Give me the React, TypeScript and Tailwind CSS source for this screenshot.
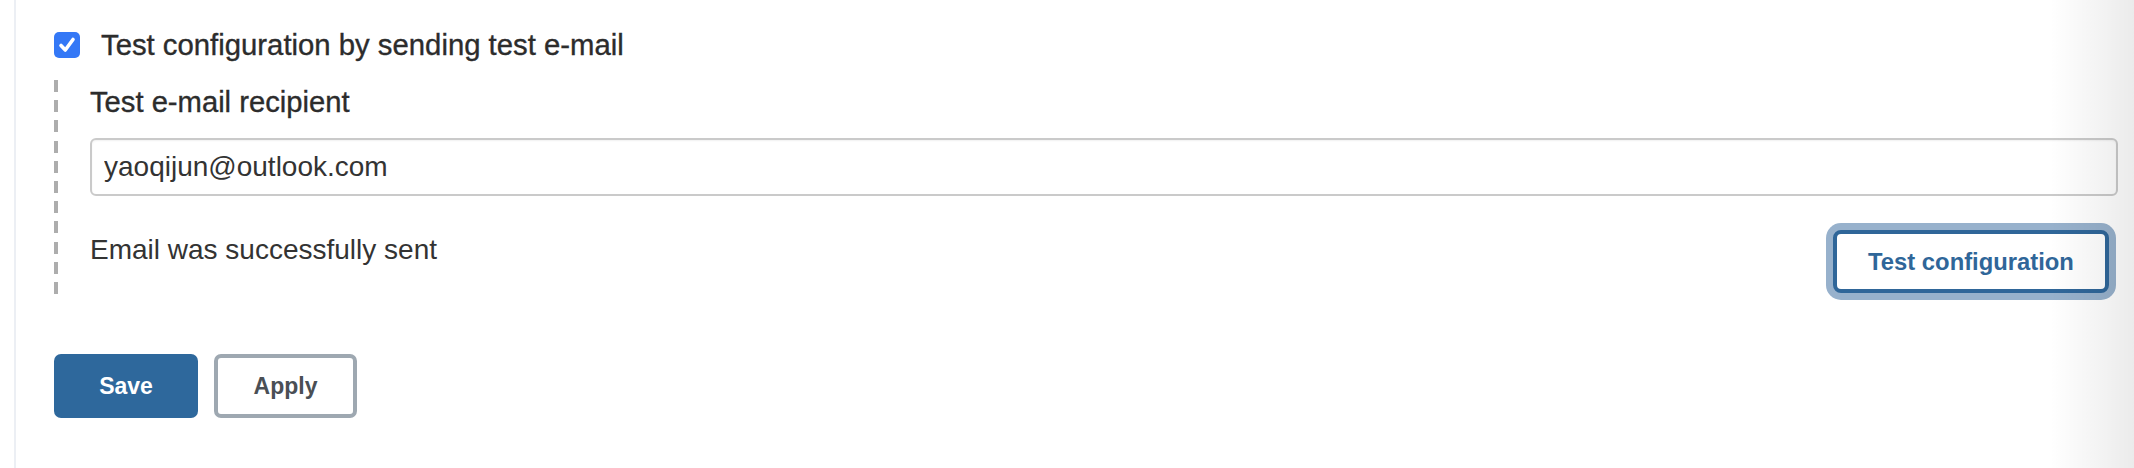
const CheckMark = () => (
  <div className="flex items-center justify-center w-[26px] h-[26px] rounded-[5px] bg-[#3478f6]">
    <svg width="20" height="20" viewBox="0 0 20 20" fill="none">
      <path d="M4 10.5 L8.3 15 L16 4.5" stroke="#fff" strokeWidth="3.6" strokeLinecap="round" strokeLinejoin="round" />
    </svg>
  </div>
);

const App = () => {
  return (
    <div className="relative flex h-[468px] bg-white overflow-hidden font-['Liberation_Sans',Arial,sans-serif] text-[#333]">
      <div className="w-[14px]" />
      <div className="w-[2px] bg-[#eceff4]" />
      <div className="flex-1 pl-[38px] pr-[16px] pt-[32px]">
        <div className="flex items-center gap-[21px] h-[26px]">
          <CheckMark />
          <span className="text-[29.3px] leading-[36px] text-[#2c2c2c] [-webkit-text-stroke:0.35px_#2c2c2c]">
            Test configuration by sending test e-mail
          </span>
        </div>

        <div className="flex mt-[22px]">
          <div className="w-[4px] h-[214px] bg-[repeating-linear-gradient(to_bottom,#adadad_0px,#adadad_12px,transparent_12px,transparent_20.2px)]" />
          <div className="flex-1 pl-[32px] pt-[4px]">
            <div className="text-[29.2px] leading-[36px] text-[#2c2c2c] [-webkit-text-stroke:0.35px_#2c2c2c]">
              Test e-mail recipient
            </div>
            <input
              className="mt-[18px] w-full h-[58px] px-[12px] border-2 border-[#cacaca] rounded-[6px] shadow-[inset_0_1px_2px_rgba(0,0,0,0.06)] text-[28px] text-[#333] outline-none"
              defaultValue="yaoqijun@outlook.com"
            />
            <div className="flex items-start justify-between mt-[34px]">
              <span className="pt-[3px] text-[28px] leading-[34px] text-[#333]">Email was successfully sent</span>
              <button className="mr-[9px] w-[276px] h-[63px] border-4 border-[#2f6699] rounded-[8px] bg-white shadow-[0_0_0_7px_#97b1cc] text-[23.8px] font-bold text-[#2f6699]">
                Test configuration
              </button>
            </div>
          </div>
        </div>

        <div className="flex gap-[16px] mt-[60px]">
          <button className="w-[144px] h-[64px] rounded-[7px] bg-[#2e689c] text-white text-[23px] font-bold">
            Save
          </button>
          <button className="w-[143px] h-[64px] rounded-[7px] border-4 border-[#9ea8b1] bg-white text-[#4a4f55] text-[23px] font-bold">
            Apply
          </button>
        </div>
      </div>
      <div className="pointer-events-none absolute top-0 right-0 h-full w-[84px] bg-gradient-to-r from-transparent to-[rgba(0,0,0,0.08)]" />
    </div>
  );
};

export default App;
